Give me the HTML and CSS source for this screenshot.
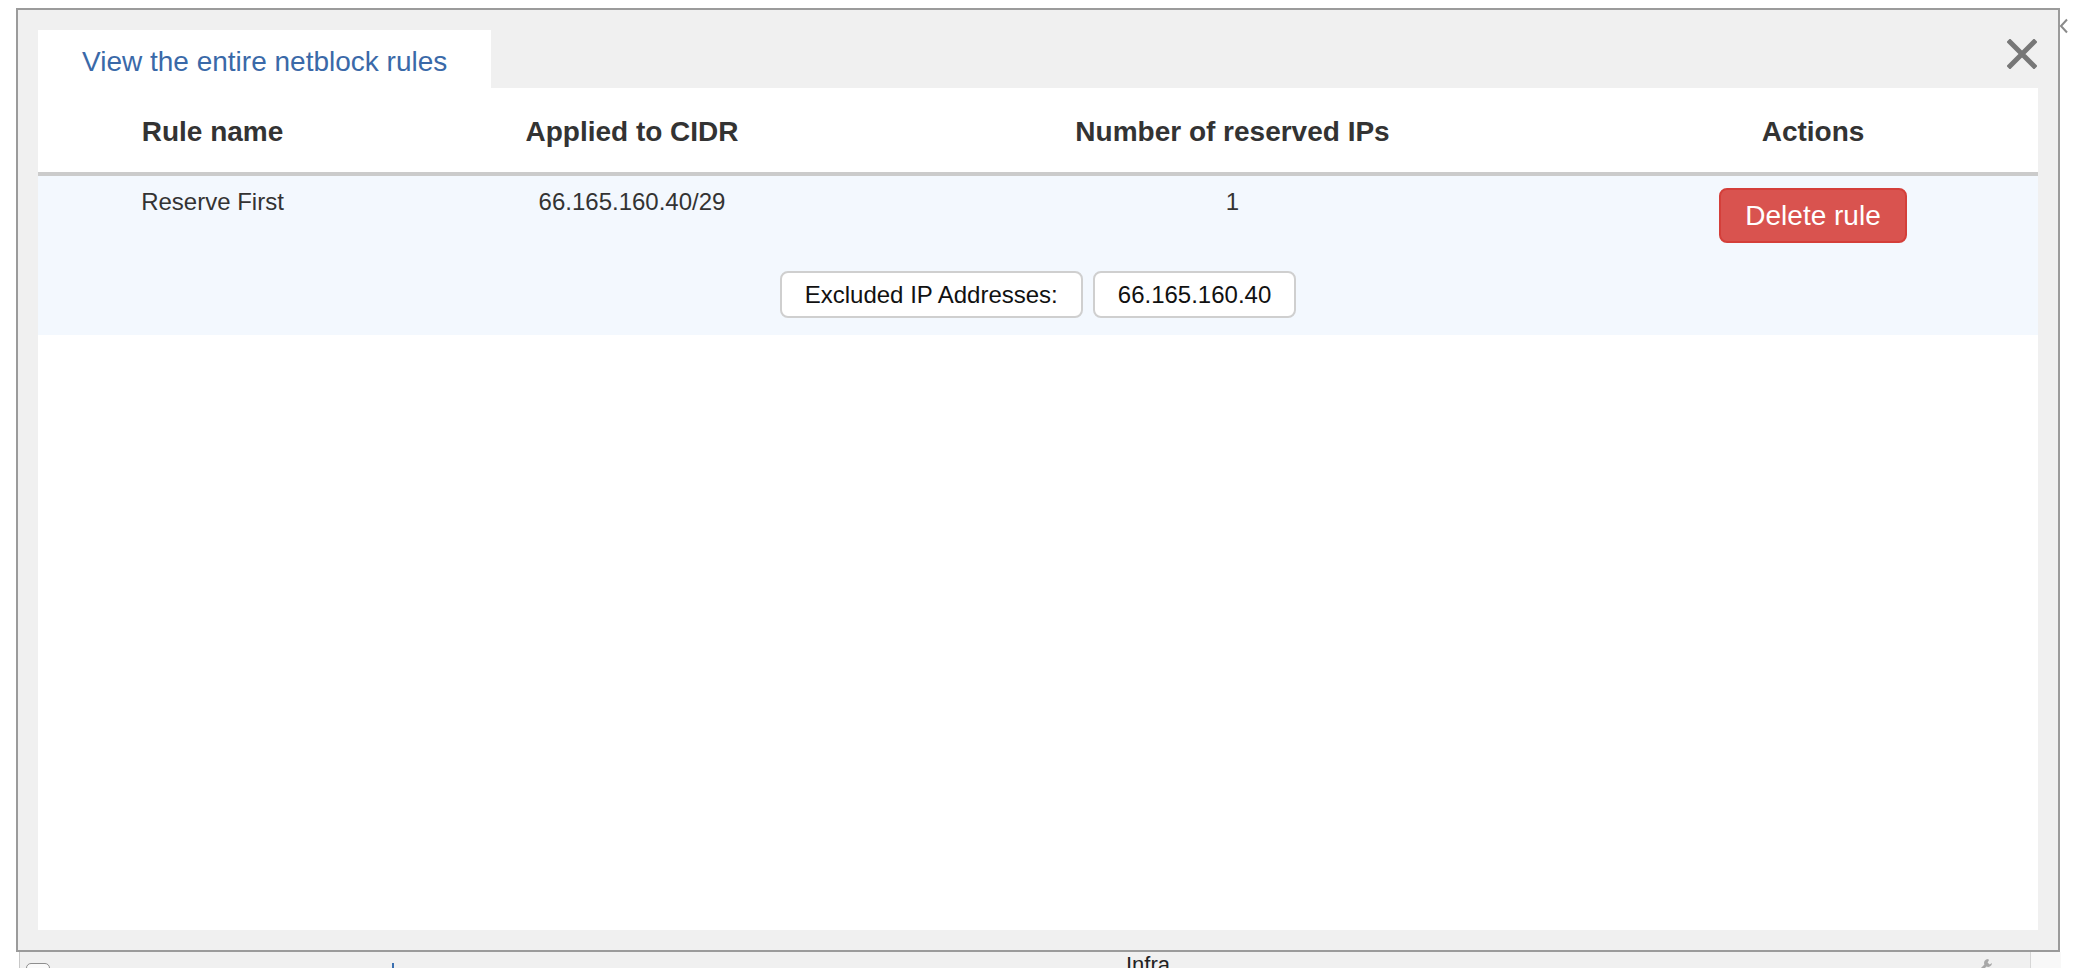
FILE: index.html
```html
<html>
	<head>
		<meta charset="utf-8">
		<link rel="stylesheet" href="styles.css">
	</head>

	<body>
		<div class='dialog'>
			<div class='dialog-head'>
				<div class='tab'>View the entire netblock rules</div>
				<button class='close' title='Close'>
					<svg width="30" height="30" viewBox="0 0 30 30">
						<path d="M3 3 L27 27 M27 3 L3 27" stroke="#777" stroke-width="5" stroke-linecap="square" fill="none"/>
					</svg>
				</button>
			</div>
			<div class='panel'>
				<table class='rules'>
					<colgroup>
						<col class='c-name'>
						<col class='c-cidr'>
						<col class='c-count'>
						<col class='c-actions'>
					</colgroup>
					<thead>
						<tr>
							<th>Rule name</th>
							<th>Applied to CIDR</th>
							<th>Number of reserved IPs</th>
							<th>Actions</th>
						</tr>
					</thead>
					<tbody>
						<tr class='rule'>
							<td>Reserve First</td>
							<td>66.165.160.40/29</td>
							<td>1</td>
							<td><button class='btn-delete'>Delete rule</button></td>
						</tr>
						<tr class='rule rule-extra'>
							<td colspan='4'>
								<div class='chips'>
									<span class='chip'>Excluded IP Addresses:</span>
									<span class='chip'>66.165.160.40</span>
								</div>
							</td>
						</tr>
					</tbody>
				</table>
			</div>
		</div>

		<!-- window underneath the dialog, mostly hidden -->
		<div class='statusbar'>
			<div class='sb-cell'><span class='checkbox'></span></div>
			<div class='sb-cell'><span class='tick'></span></div>
			<div class='sb-cell sb-label'>Infra</div>
			<div class='sb-cell'>
				<svg class='wrench' width="16" height="16" viewBox="0 0 16 16">
					<path d="M11 1 a4 4 0 0 0 -3.6 5.6 L1.5 12.5 a1.4 1.4 0 0 0 2 2 L9.4 8.6 A4 4 0 0 0 15 5 l-2.4 1.4 -2 -2 L12 2 Z" fill="#a8a8a8"/>
				</svg>
			</div>
			<div class='sb-cell sb-end'></div>
		</div>
		<svg class='peek-close' width="10" height="16" viewBox="0 0 10 16">
			<path d="M8 1.5 L2 8 L8 14.5" stroke="#8a8a8a" stroke-width="2" fill="none"/>
		</svg>
	</body>
</html>
```

FILE: styles.css
```css
html, body {
	height: 100%;
}

body {
	margin: 0;
	background: #fff;
	font-family: "Liberation Sans", Arial, sans-serif;
	color: #333;
	overflow: hidden;
	position: relative;
}

.dialog {
	box-sizing: border-box;
	width: 2044px;
	height: 944px;
	margin: 8px 0 0 16px;
	padding: 20px;
	border: 2px solid #9b9b9b;
	background: #f0f0f0;
	display: flex;
	flex-direction: column;
}

.dialog-head {
	display: flex;
	justify-content: space-between;
	align-items: flex-start;
	height: 58px;
}

.tab {
	background: #fff;
	padding: 12px 44px 6px;
	font-size: 28px;
	line-height: 40px;
	color: #3a69a8;
}

.close {
	width: 30px;
	height: 30px;
	margin: 9px 1px 0 0;
	padding: 0;
	border: 0;
	background: none;
}
.close svg {
	display: block;
}

.panel {
	flex: 1;
	background: #fff;
}

.rules {
	width: 100%;
	border-collapse: collapse;
	table-layout: fixed;
}
.c-name { width: 349px; }
.c-cidr { width: 490px; }
.c-count { width: 711px; }
.c-actions { width: 450px; }

.rules th {
	padding: 24px 0 20px;
	font-size: 28px;
	line-height: 40px;
	font-weight: bold;
	text-align: center;
	border-bottom: 4px solid #cbcbcb;
}

.rule {
	background: #f3f8fe;
}
.rule td {
	padding: 12px 0 0;
	font-size: 24px;
	line-height: 28px;
	text-align: center;
	vertical-align: top;
}
.rule-extra td {
	padding: 28px 0 17px;
}

.btn-delete {
	display: inline-block;
	vertical-align: top;
	padding: 6px 24px 5px;
	border: 2px solid #d43f3a;
	border-radius: 8px;
	background: #d9534f;
	color: #fff;
	font-family: inherit;
	font-size: 28px;
	line-height: 40px;
}

.chips {
	display: flex;
	justify-content: center;
	gap: 10px;
}
.chip {
	padding: 5px 23px 4px;
	border: 2px solid #cfcfcf;
	border-radius: 8px;
	background: #fff;
	color: #111;
	font-size: 24px;
	line-height: 34px;
}

.statusbar {
	width: 2041px;
	height: 16px;
	margin-left: 19px;
	border-left: 1px solid #c8c8c8;
	background: #f0f0f0;
	display: grid;
	grid-template-columns: 372px 734px 851px 53px 1fr;
	overflow: hidden;
}
.sb-cell {
	position: relative;
}
.checkbox {
	display: block;
	width: 22px;
	height: 22px;
	margin: 11px 0 0 6px;
	border: 1px solid #8e8e8e;
	border-radius: 5px;
	background: #fafafa;
}
.tick {
	display: block;
	width: 2px;
	height: 6px;
	margin-top: 11px;
	background: #3a6fb0;
}
.sb-label {
	padding-top: 3px;
	font-size: 22px;
	line-height: 20px;
	color: #222;
}
.wrench {
	display: block;
	margin-top: 6px;
}
.sb-end {
	border-left: 1px solid #d6d6d6;
	background: #f8f8f8;
}

.peek-close {
	position: absolute;
	left: 2059px;
	top: 18px;
}
```
